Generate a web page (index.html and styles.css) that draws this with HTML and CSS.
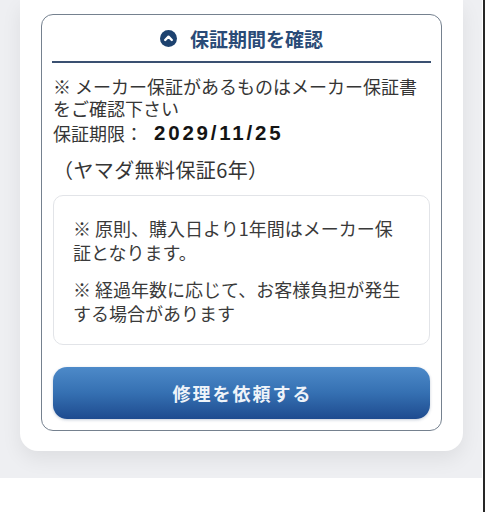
FILE: index.html
```html
<!DOCTYPE html>
<html lang="ja">
<head>
<meta charset="utf-8">
<title>保証期間を確認</title>
<link rel="stylesheet" href="styles.css">
</head>
<body>
<div class="frame">
  <div class="bg">
    <div class="card">
      <section class="warranty">
        <div class="head">
          <svg class="head-icon" width="17" height="17" viewBox="0 0 17 17" aria-hidden="true">
            <circle cx="8.5" cy="8.5" r="8.5" fill="#1d426f"/>
            <path d="M5.2 10 L8.5 6.7 L11.8 10" fill="none" stroke="#fff" stroke-width="2.4" stroke-linecap="round" stroke-linejoin="round"/>
          </svg>
          <span class="head-title">保証期間を確認</span>
        </div>
        <p class="maker">※ メーカー保証があるものはメーカー保証書をご確認下さい</p>
        <p class="limit"><span class="limit-label">保証期限：</span><strong class="date">2029/11/25</strong></p>
        <p class="plan">（ヤマダ無料保証6年）</p>
        <div class="notes">
          <p>※ 原則、購入日より1年間はメーカー保証となります。</p>
          <p>※ 経過年数に応じて、お客様負担が発生する場合があります</p>
        </div>
        <button class="repair" type="button">修理を依頼する</button>
      </section>
    </div>
  </div>
</div>
</body>
</html>
```
FILE: styles.css
```css
html, body {
  margin: 0;
  padding: 0;
  background: #ffffff;
}

body {
  font-family: "Noto Sans CJK JP", "Noto Sans", sans-serif;
  color: #333;
}

.frame {
  width: 482px;
  min-height: 512px;
  padding-right: 1px;
  border-right: 2px solid #262626;
}

.bg {
  background: #eeeff2;
  padding: 0 0 27px 20px;
}

.card {
  width: 443px;
  box-sizing: border-box;
  background: #fff;
  border-radius: 0 0 18px 18px;
  padding: 14px 21px 20px 21px;
  box-shadow: 0 8px 20px rgba(0, 0, 0, 0.07);
}

.warranty {
  border: 1px solid #75818f;
  border-radius: 12px;
  padding: 0 11px 11px 11px;
}

.head {
  height: 46px;
  display: flex;
  align-items: center;
  justify-content: center;
  gap: 13px;
  border-bottom: 2px solid #3a5071;
  margin: 0 -1px;
}

.head-icon {
  display: block;
  flex: none;
}

.head-title {
  font-size: 19px;
  font-weight: 700;
  color: #2a4b77;
  line-height: 1;
}

.maker {
  margin: 12px 0 0;
  font-size: 18px;
  line-height: 22px;
  color: #353535;
}

.limit {
  margin: 0;
  height: 28px;
  display: flex;
  align-items: center;
  color: #353535;
}

.limit-label {
  font-size: 18px;
  line-height: 22px;
}

.date {
  font-family: "Liberation Sans", Arial, sans-serif;
  font-size: 20.5px;
  line-height: 22px;
  font-weight: 700;
  color: #141414;
  letter-spacing: 2.8px;
  margin-left: 11px;
}

.plan {
  margin: 12px 0 0;
  font-size: 20px;
  line-height: 22px;
  letter-spacing: 0.4px;
  color: #353535;
}

.notes {
  margin-top: 14px;
  border: 1px solid #e2e4e8;
  border-radius: 10px;
  padding: 20px 19px 19px 19px;
}

.notes p {
  margin: 0;
  font-size: 18px;
  line-height: 24px;
  color: #3a3a3a;
}

.notes p + p {
  margin-top: 13px;
}

.repair {
  display: block;
  width: 100%;
  height: 52px;
  margin-top: 22px;
  border: none;
  border-radius: 14px;
  background: linear-gradient(180deg, #4d8ac9 0%, #3570b2 50%, #1e4b8f 100%);
  box-shadow: 0 1px 3px rgba(20, 50, 100, 0.25);
  color: #eef3f9;
  font-family: "Noto Sans CJK JP", "Noto Sans", sans-serif;
  font-size: 18px;
  font-weight: 700;
  letter-spacing: 2px;
  padding: 0 0 0 2px;
}
```
